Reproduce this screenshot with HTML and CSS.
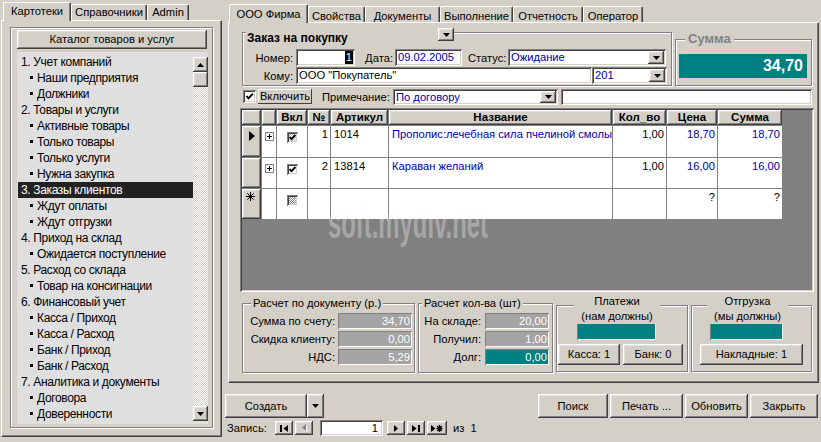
FILE: index.html
```html
<!DOCTYPE html>
<html>
<head>
<meta charset="utf-8">
<link rel="stylesheet" href="styles.css">
</head>
<body>
<div class="app">
  <div class="left">
    <div class="tabrow ltabs">
      <div class="tab sel lt1">Картотеки</div>
      <div class="tab lt2">Справочники</div>
      <div class="tab lt3">Admin</div>
    </div>
    <div class="lpanel">
      <div class="lframe">
        <div class="btn catalog">Каталог товаров и услуг</div>
        <div class="listbox">
          <ul class="list">
            <li>1. Учет компаний</li>
            <li class="sub">Наши предприятия</li>
            <li class="sub">Должники</li>
            <li>2. Товары и услуги</li>
            <li class="sub">Активные товары</li>
            <li class="sub">Только товары</li>
            <li class="sub">Только услуги</li>
            <li class="sub">Нужна закупка</li>
            <li class="sel">3. Заказы клиентов</li>
            <li class="sub">Ждут оплаты</li>
            <li class="sub">Ждут отгрузки</li>
            <li>4. Приход на склад</li>
            <li class="sub">Ожидается поступление</li>
            <li>5. Расход со склада</li>
            <li class="sub">Товар на консигнации</li>
            <li>6. Финансовый учет</li>
            <li class="sub">Касса / Приход</li>
            <li class="sub">Касса / Расход</li>
            <li class="sub">Банк / Приход</li>
            <li class="sub">Банк / Расход</li>
            <li>7. Аналитика и документы</li>
            <li class="sub">Договора</li>
            <li class="sub">Доверенности</li>
          </ul>
          <div class="vscroll">
            <div class="sbtn"><svg width="7" height="4" viewBox="0 0 7 4"><path d="M0 4h7L3.5 0z"/></svg></div>
            <div class="sthumb"></div>
            <div class="strack"></div>
            <div class="sbtn"><svg width="7" height="4" viewBox="0 0 7 4"><path d="M0 0h7L3.5 4z"/></svg></div>
          </div>
        </div>
      </div>
    </div>
  </div>

  <div class="right">
    <div class="tabrow rtabs">
      <div class="tab sel rt1">ООО Фирма</div>
      <div class="tab rt2">Свойства</div>
      <div class="tab rt3">Документы</div>
      <div class="tab rt4">Выполнение</div>
      <div class="tab rt5">Отчетность</div>
      <div class="tab rt6">Оператор</div>
    </div>
    <div class="mpanel">
      <div class="toprow">
        <div class="grp order">
          <div class="otitle">Заказ на покупку</div>
          <div class="dd odd"><svg width="7" height="4" viewBox="0 0 7 4"><path d="M0 0h7L3.5 4z"/></svg></div>
          <div class="frow">
            <div class="lbl l-num">Номер:</div>
            <div class="inp i-num"><span class="hl">1</span></div>
            <div class="lbl l-date">Дата:</div>
            <div class="inp i-date blue">09.02.2005</div>
            <div class="lbl l-stat">Статус:</div>
            <div class="combo c-stat"><span class="val blue">Ожидание</span><span class="dd"><svg width="7" height="4" viewBox="0 0 7 4"><path d="M0 0h7L3.5 4z"/></svg></span></div>
          </div>
          <div class="frow">
            <div class="lbl l-num">Кому:</div>
            <div class="inp i-to">ООО "Покупатель"</div>
            <div class="combo c-to"><span class="val blue">201</span><span class="dd"><svg width="7" height="4" viewBox="0 0 7 4"><path d="M0 0h7L3.5 4z"/></svg></span></div>
          </div>
        </div>
        <div class="grp sum">
          <div class="stitle">Сумма</div>
          <div class="bigsum">34,70</div>
        </div>
      </div>

      <div class="noterow">
        <div class="cbx"><svg width="13" height="13" viewBox="0 0 13 13"><path d="M3.5 6 L5.5 8.3 L9.8 3.6" fill="none" stroke="#000" stroke-width="1.9"/></svg></div>
        <div class="incl">Включить</div>
        <div class="lbl l-note">Примечание:</div>
        <div class="combo c-note"><span class="val blue">По договору</span><span class="dd"><svg width="7" height="4" viewBox="0 0 7 4"><path d="M0 0h7L3.5 4z"/></svg></span></div>
        <div class="inp i-note"></div>
      </div>

      <div class="grid">
        <div class="dg">
          <div class="hc"></div>
          <div class="hc"></div>
          <div class="hc">Вкл</div>
          <div class="hc">№</div>
          <div class="hc">Артикул</div>
          <div class="hc">Название</div>
          <div class="hc">Кол_во</div>
          <div class="hc">Цена</div>
          <div class="hc">Сумма</div>

          <div class="ic"><span class="tri"></span></div>
          <div class="c ex"><span class="plus"></span></div>
          <div class="c ck"><span class="cb hatch"><svg width="11" height="11" viewBox="0 0 11 11"><path d="M2.6 5 L4.5 7.2 L8.4 3" fill="none" stroke="#000" stroke-width="1.9"/></svg></span></div>
          <div class="c r">1</div>
          <div class="c">1014</div>
          <div class="c blue">Прополис:лечебная сила пчелиной смолы</div>
          <div class="c r">1,00</div>
          <div class="c r blue">18,70</div>
          <div class="c r blue">18,70</div>

          <div class="ic"></div>
          <div class="c ex"><span class="plus"></span></div>
          <div class="c ck"><span class="cb"><svg width="11" height="11" viewBox="0 0 11 11"><path d="M2.6 5 L4.5 7.2 L8.4 3" fill="none" stroke="#000" stroke-width="1.9"/></svg></span></div>
          <div class="c r">2</div>
          <div class="c">13814</div>
          <div class="c blue">Караван желаний</div>
          <div class="c r">1,00</div>
          <div class="c r blue">16,00</div>
          <div class="c r blue">16,00</div>

          <div class="ic"><svg class="ast" width="9" height="9" viewBox="0 0 9 9"><path d="M4.5 0v9M0 4.5h9M1.3 1.3l6.4 6.4M7.7 1.3l-6.4 6.4" stroke="#000" stroke-width="1" fill="none"/></svg></div>
          <div class="c"></div>
          <div class="c ck"><span class="cb checker"></span></div>
          <div class="c"></div>
          <div class="c"></div>
          <div class="c"></div>
          <div class="c"></div>
          <div class="c r">?</div>
          <div class="c r">?</div>
        </div>
        <div class="wm">soft.mydiv.net</div>
      </div>

      <div class="bgroups">
        <div class="grp g1">
          <div class="gtitle">Расчет по документу (р.)</div>
          <div class="crow"><div class="lbl gl1">Сумма по счету:</div><div class="field gf1">34,70</div></div>
          <div class="crow"><div class="lbl gl1">Скидка клиенту:</div><div class="field gf1">0,00</div></div>
          <div class="crow"><div class="lbl gl1">НДС:</div><div class="field gf1">5,29</div></div>
        </div>
        <div class="grp g2">
          <div class="gtitle">Расчет кол-ва (шт)</div>
          <div class="crow"><div class="lbl gl2">На складе:</div><div class="field gf2">20,00</div></div>
          <div class="crow"><div class="lbl gl2">Получил:</div><div class="field gf2">1,00</div></div>
          <div class="crow"><div class="lbl gl2">Долг:</div><div class="field gf2 tealf">0,00</div></div>
        </div>
        <div class="grp g3">
          <div class="ctitle t3"><span>Платежи<br>(нам должны)</span></div>
          <div class="tealbox tb3"></div>
          <div class="brow">
            <div class="btn b-kassa">Касса: 1</div>
            <div class="btn b-bank">Банк: 0</div>
          </div>
        </div>
        <div class="grp g4">
          <div class="ctitle t4"><span>Отгрузка<br>(мы должны)</span></div>
          <div class="tealbox tb4"></div>
          <div class="brow">
            <div class="btn b-nakl">Накладные: 1</div>
          </div>
        </div>
      </div>
    </div>

    <div class="footer">
      <div class="frow1">
        <div class="btn b-create">Создать</div>
        <div class="btn b-cdd"><svg width="7" height="4" viewBox="0 0 7 4"><path d="M0 0h7L3.5 4z"/></svg></div>
        <div class="rbtns">
          <div class="btn b-search">Поиск</div>
          <div class="btn b-print">Печать ...</div>
          <div class="btn b-refresh">Обновить</div>
          <div class="btn b-close">Закрыть</div>
        </div>
      </div>
      <div class="frow2">
        <div class="zlabel">Запись:</div>
        <div class="nbtn"><svg width="8" height="7" viewBox="0 0 8 7"><rect x="0" y="0" width="2" height="7"/><path d="M8 0v7L3.5 3.5z"/></svg></div>
        <div class="nbtn nb2"><svg width="5" height="8" viewBox="0 0 5 8"><path d="M5 1v7L1 4.5z" fill="#fff"/><path d="M4 0v7L0 3.5z" fill="#808080"/></svg></div>
        <div class="navinp">1</div>
        <div class="nbtn nb3"><svg width="4" height="7" viewBox="0 0 4 7"><path d="M0 0v7L4 3.5z"/></svg></div>
        <div class="nbtn nb4"><svg width="8" height="7" viewBox="0 0 8 7"><path d="M0 0v7L4.5 3.5z"/><rect x="6" y="0" width="2" height="7"/></svg></div>
        <div class="nbtn nb5"><svg width="12" height="7" viewBox="0 0 12 7"><path d="M0 0v7L4.5 3.5z"/><path d="M8.5 0v7M5.5 3.5h6M6.3 1l4.4 5M10.7 1l-4.4 5" stroke="#000" stroke-width="1.3" fill="none"/></svg></div>
        <div class="iz">из&nbsp; 1</div>
      </div>
    </div>
  </div>
</div>
</body>
</html>
```

FILE: styles.css
```css
* { box-sizing: border-box; }
html, body { margin: 0; padding: 0; }
body {
  width: 821px;
  height: 442px;
  overflow: hidden;
  background: #d4d0c8;
  font: 11.2px/14px "Liberation Sans", Arial, sans-serif;
  color: #000;
}
.blue { color: #0000a8; }

.app { display: flex; height: 442px; }

/* ---------- bevels ---------- */
.btn, .sbtn, .sthumb, .dd, .hc, .ic, .nbtn {
  background: #d4d0c8;
  box-shadow: inset -1px -1px #404040, inset 1px 1px #fff, inset -2px -2px #808080, inset 2px 2px #dfdfdf;
}
.inp, .combo, .cbx, .cb, .navinp {
  background: #fff;
  box-shadow: inset 1px 1px #808080, inset -1px -1px #fff, inset 2px 2px #404040, inset -2px -2px #d4d0c8;
}
.grp {
  position: relative;
  border: 1px solid #808080;
  box-shadow: inset 1px 1px #fff, 1px 1px #fff;
}
.btn { text-align: center; white-space: nowrap; }

/* ---------- tabs ---------- */
.tabrow { display: flex; align-items: flex-end; }
.tab {
  height: 16px;
  border-top: 1px solid #fff;
  border-left: 1px solid #fff;
  border-right: 1px solid #404040;
  border-radius: 2px 2px 0 0;
  box-shadow: inset -1px 0 #808080;
  text-align: center;
  white-space: nowrap;
  line-height: 14px;
}
.tab.sel {
  height: 19px;
  margin-bottom: -1px;
  position: relative;
  z-index: 2;
  background: #d4d0c8;
}
.ltabs { height: 20px; padding-left: 2px; }
.ltabs .tab.sel { padding-top: 1px; }
.lt1 { width: 68px; }
.lt2 { width: 76px; }
.lt3 { width: 42px; }
.rtabs { height: 22px; padding-left: 4px; }
.rtabs .tab { padding-top: 2px; }
.rt1 { width: 79px; }
.rt2 { width: 57px; }
.rt3 { width: 75px; }
.rt4 { width: 73px; }
.rt5 { width: 70px; }
.rt6 { width: 60px; }

/* ---------- left ---------- */
.left { width: 225px; padding-left: 1px; display: flex; flex-direction: column; }
.lpanel {
  width: 221px;
  height: 417px;
  border-top: 1px solid #fff;
  border-left: 1px solid #fff;
  border-right: 1px solid #404040;
  border-bottom: 1px solid #404040;
  box-shadow: inset -1px -1px #808080;
  padding: 6px 0 0 8px;
}
.lframe {
  width: 203px;
  height: 401px;
  border: 1px solid #808080;
  box-shadow: inset 1px 1px #fff, 1px 1px #fff;
  padding: 2px 0 0 6px;
}
.catalog { width: 190px; height: 19px; line-height: 19px; }
.listbox {
  margin-top: 3px;
  width: 191px;
  height: 372px;
  background: #dfdfdf;
  display: flex;
  padding: 2px 0 0 1px;
}
.list { margin: 0; padding: 0; list-style: none; width: 175px; font-size: 12px; }
.list li { height: 16px; line-height: 16px; padding-left: 3px; white-space: nowrap; letter-spacing: -0.35px; }
.list li.sub { padding-left: 12px; }
.list li.sub::before {
  content: "";
  display: inline-block;
  width: 3px;
  height: 3px;
  background: #000;
  margin-right: 4px;
  vertical-align: 3px;
}
.list li.sel { background: #222; color: #fff; }
.vscroll { width: 15px; display: flex; flex-direction: column; padding: 3px 0 3px; }
.sbtn, .sthumb { height: 15px; flex: none; display: flex; align-items: center; justify-content: center; }
.strack {
  flex: 1;
  background: repeating-conic-gradient(#d4d0c8 0 25%, #fff 0 50%) 0 0 / 2px 2px;
}

/* ---------- right ---------- */
.right { width: 596px; display: flex; flex-direction: column; }
.mpanel {
  margin-left: 3px;
  width: 591px;
  height: 361px;
  border-top: 1px solid #fff;
  border-left: 1px solid #fff;
  border-right: 1px solid #404040;
  border-bottom: 1px solid #404040;
  box-shadow: inset -1px -1px #808080;
  padding: 9px 0 0 12px;
}
.toprow { display: flex; align-items: flex-end; }
.order { margin-left: 1px; width: 430px; height: 54px; padding-top: 16px; }
.otitle {
  position: absolute;
  left: 3px;
  top: -2px;
  width: 192px;
  height: 15px;
  background: #d4d0c8;
  font-weight: bold;
  font-size: 12px;
  line-height: 15px;
  padding-left: 1px;
}
.odd {
  position: absolute;
  left: 195px;
  top: -5px;
  width: 17px;
  height: 14px;
}
.frow { display: flex; align-items: center; height: 17px; }
.frow + .frow { margin-top: 1px; }
.lbl { text-align: right; padding-right: 2px; white-space: nowrap; }
.inp { height: 17px; padding: 2px 3px; line-height: 13px; white-space: nowrap; overflow: hidden; }
.combo { display: flex; height: 17px; padding: 2px; }
.combo .val { flex: 1; padding-left: 1px; line-height: 13px; white-space: nowrap; overflow: hidden; }
.dd { width: 16px; height: 13px; display: flex; align-items: center; justify-content: center; flex: none; }
.dd svg { margin-top: 1px; }
.l-num { width: 52px; }
.i-num { margin-left: 1px; width: 59px; text-align: right; padding-right: 2px; }
.hl { display: inline-block; height: 13px; background: #000; color: #fff; padding: 0 1px; }
.l-date { margin-left: 8px; width: 32px; }
.i-date { width: 67px; }
.l-stat { margin-left: 6px; width: 40px; }
.c-stat { width: 158px; }
.i-to { margin-left: 1px; width: 296px; }
.c-to { width: 75px; }

.sum { margin-left: 3px; width: 137px; height: 47px; padding: 14px 0 0 3px; }
.stitle {
  position: absolute;
  left: 9px;
  top: -9px;
  padding: 0 3px;
  background: #d4d0c8;
  color: #808080;
  font-weight: bold;
  font-size: 13px;
  line-height: 15px;
}
.bigsum {
  width: 128px;
  height: 24px;
  background: #008080;
  color: #fff;
  font-weight: bold;
  font-size: 16px;
  line-height: 24px;
  text-align: right;
  padding-right: 4px;
}

.noterow { display: flex; align-items: center; height: 15px; margin-top: 3px; margin-left: 2px; }
.cbx { width: 13px; height: 13px; display: flex; }
.incl {
  margin-left: 2px;
  width: 54px;
  height: 15px;
  line-height: 14px;
  text-align: center;
  box-shadow: inset -1px -1px #404040, inset 1px 1px #fff;
}
.l-note { margin-left: 10px; width: 68px; text-align: left; }
.c-note { margin-left: 3px; width: 165px; height: 16px; }
.c-note .dd { height: 12px; }
.i-note { margin-left: 3px; width: 251px; height: 16px; }

/* ---------- grid ---------- */
.grid {
  position: relative;
  margin-top: 4px;
  margin-left: -1px;
  width: 574px;
  height: 184px;
  background: #808080;
  padding: 2px;
  overflow: hidden;
  box-shadow: inset 1px 1px #808080, inset -1px -1px #fff, inset 2px 2px #404040, inset -2px -2px #d4d0c8;
}
.dg {
  display: grid;
  grid-template-columns: 19px 14px 30px 22px 57px 223px 53px 50px 64px;
  grid-template-rows: 15px 31px 30px 30px;
  gap: 1px;
  width: 541px;
  padding: 0 1px 1px 0;
  background: #808080;
}
.hc { font-weight: bold; text-align: center; line-height: 15px; white-space: nowrap; overflow: hidden; font-size: 11.5px; }
.ic { position: relative; }
.tri {
  position: absolute;
  left: 7px;
  top: 5px;
  width: 0;
  height: 0;
  border-top: 5px solid transparent;
  border-bottom: 5px solid transparent;
  border-left: 6px solid #000;
}
.ast { position: absolute; left: 4px; top: 3px; }
.c { background: #fff; padding: 1px 3px 0; white-space: nowrap; overflow: hidden; line-height: 14px; }
.c.r { text-align: right; padding: 1px 2px 0 0; }
.ex { padding: 0; }
.plus {
  display: block;
  margin: 6px 0 0 3px;
  width: 9px;
  height: 9px;
  border: 1px solid #808080;
  background:
    linear-gradient(#000, #000) center / 5px 1px no-repeat,
    linear-gradient(#000, #000) center / 1px 5px no-repeat,
    #fff;
}
.ck { display: flex; justify-content: center; padding: 6px 0 0; }
.cb { width: 11px; height: 11px; display: block; }
.cb.hatch {
  background: repeating-conic-gradient(#c0c0c0 0 25%, #fff 0 50%) 0 0 / 2px 2px;
}
.cb.checker {
  background: repeating-conic-gradient(#808080 0 25%, #fff 0 50%) 0 0 / 2px 2px;
}
.cb svg { display: block; }
.wm {
  position: absolute;
  left: 88px;
  top: 92px;
  font-family: "Liberation Sans", Arial, sans-serif;
  font-weight: bold;
  font-size: 45px;
  line-height: 45px;
  color: rgba(255, 255, 255, 0.33);
  -webkit-text-stroke: 0.6px rgba(0, 0, 0, 0.08);
  transform: scaleX(0.53);
  transform-origin: 0 0;
  white-space: nowrap;
  pointer-events: none;
}

/* ---------- bottom groups ---------- */
.bgroups { display: flex; align-items: flex-start; margin-top: 11px; }
.g1 { margin-left: 1px; width: 173px; height: 70px; padding-top: 9px; }
.g2 { margin-left: 3px; width: 135px; height: 70px; padding-top: 9px; }
.g3 { margin-left: 3px; margin-top: 2px; width: 132px; height: 67px; padding-top: 17px; }
.g4 { margin-left: 3px; margin-top: 2px; width: 121px; height: 67px; padding-top: 17px; }
.gtitle {
  position: absolute;
  top: -8px;
  padding: 0 2px;
  background: #d4d0c8;
  white-space: nowrap;
}
.g1 .gtitle { left: 8px; }
.g2 .gtitle { left: 3px; }
.ctitle {
  position: absolute;
  top: -12px;
  left: 0;
  text-align: center;
  line-height: 15px;
}
.ctitle span { display: inline-block; background: #d4d0c8; padding: 0 7px; }
.t3 { width: 120px; }
.t4 { width: 111px; }
.crow { display: flex; align-items: center; height: 16px; }
.crow + .crow { margin-top: 2px; }
.gl1 { width: 93px; padding-right: 1px; }
.gl2 { width: 63px; padding-right: 1px; }
.field {
  height: 16px;
  line-height: 16px;
  background: #a4a4a4;
  color: #fff;
  text-align: right;
  padding-right: 2px;
  box-shadow: inset 1px 1px #808080, inset -1px -1px #fff;
}
.gf1 { margin-left: 2px; width: 74px; }
.gf2 { margin-left: 3px; width: 64px; }
.tealf { background: #008080; }
.tealbox { height: 17px; background: #008080; box-shadow: inset 1px 1px #808080, inset -1px -1px #fff; }
.tb3 { margin-left: 20px; width: 79px; }
.tb4 { margin-left: 18px; width: 73px; }
.brow { display: flex; margin-top: 4px; }
.brow .btn { height: 21px; line-height: 21px; }
.b-kassa { margin-left: 1px; width: 62px; }
.b-bank { margin-left: 3px; width: 60px; }
.b-nakl { margin-left: 8px; width: 103px; }

/* ---------- footer ---------- */
.footer { padding: 11px 3px 0 0; }
.frow1 { display: flex; height: 24px; }
.frow1 .btn { height: 24px; line-height: 24px; }
.b-create { width: 82px; }
.b-cdd { width: 17px; display: flex; align-items: center; justify-content: center; }
.rbtns { margin-left: auto; display: flex; gap: 2px; }
.b-search { width: 70px; }
.b-print { width: 73px; }
.b-refresh { width: 63px; }
.b-close { width: 68px; }
.frow2 { display: flex; align-items: center; height: 16px; margin-top: 2px; padding-left: 2px; }
.zlabel { width: 48px; }
.nbtn { width: 18px; height: 14px; display: flex; align-items: center; justify-content: center; }
.nb2 { margin-left: 2px; }
.navinp { margin-left: 7px; width: 63px; height: 16px; line-height: 16px; text-align: right; padding-right: 5px; }
.nb3 { margin-left: 4px; }
.nb4 { margin-left: 2px; }
.nb5 { margin-left: 2px; width: 20px; }
.iz { margin-left: 6px; }
```
